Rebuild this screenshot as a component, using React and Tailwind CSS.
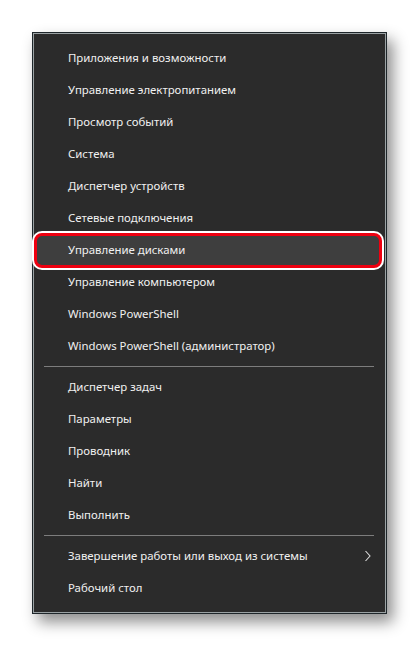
import React from 'react'

const groups = [
  [
    'Приложения и возможности',
    'Управление электропитанием',
    'Просмотр событий',
    'Система',
    'Диспетчер устройств',
    'Сетевые подключения',
    'Управление дисками',
    'Управление компьютером',
    'Windows PowerShell',
    'Windows PowerShell (администратор)',
  ],
  ['Диспетчер задач', 'Параметры', 'Проводник', 'Найти', 'Выполнить'],
  ['Завершение работы или выход из системы', 'Рабочий стол'],
]

const MenuRow = ({ label, selected, arrow }) => (
  <div className="relative flex h-8 items-center pl-[34px] pr-4">
    {selected && (
      <div className="absolute -top-px -bottom-[2px] left-0 right-[3px] rounded-[8px] border-[3px] border-[#ee0010] bg-[#3e3e3e] shadow-[0_0_0_2px_#ffffff]" />
    )}
    <span className="relative text-[11.4px] text-[#f0f0f0]">{label}</span>
    {arrow && (
      <svg className="absolute right-[14px] top-1/2 -translate-y-1/2" width="6" height="11" viewBox="0 0 6 11">
        <path d="M0.5 0.5 L5 5.5 L0.5 10.5" fill="none" stroke="#dcdcdc" strokeWidth="1.1" />
      </svg>
    )}
  </div>
)

const App = () => {
  return (
    <div className="min-h-screen bg-white pt-8 pl-8" style={{ fontFamily: '"Noto Sans", "Open Sans", sans-serif' }}>
      <div className="w-[355px] border border-[#1e262a] shadow-[6px_8px_14px_rgba(0,0,0,0.45)]">
        <div className="border border-[#9aa1a3] bg-[#2b2b2b] py-[8px]">
          {groups.map((group, gi) => (
            <div key={gi}>
              {gi > 0 && <div className="my-[4px] ml-[10px] mr-[11px] h-px bg-[#7d7d7d]" />}
              {group.map((label) => (
                <MenuRow
                  key={label}
                  label={label}
                  selected={label === 'Управление дисками'}
                  arrow={label.startsWith('Завершение')}
                />
              ))}
            </div>
          ))}
        </div>
      </div>
    </div>
  )
}

export default App
